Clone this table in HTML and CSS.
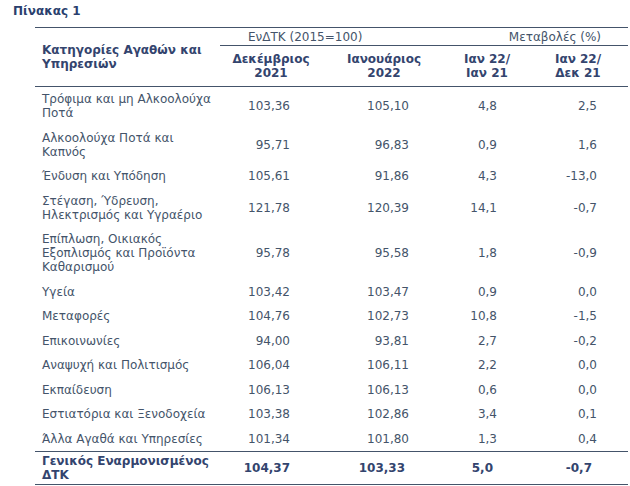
FILE: index.html
```html
<!DOCTYPE html>
<html lang="el">
<head>
<meta charset="utf-8">
<title>Πίνακας 1</title>
<link rel="stylesheet" href="styles.css">
</head>
<body>
<div class="page">
  <h1 class="title">Πίνακας 1</h1>
  <table class="cpi">
    <colgroup>
      <col class="c-cat"><col class="c-dec"><col class="c-jan"><col class="c-y"><col class="c-m">
    </colgroup>
    <thead>
      <tr class="h1">
        <th rowspan="2" class="cat-head">Κατηγορίες Αγαθών και Υπηρεσιών</th>
        <th colspan="2" class="grp grp-idx">ΕνΔΤΚ (2015=100)</th>
        <th colspan="2" class="grp grp-chg">Μεταβολές (%)</th>
      </tr>
      <tr class="h2">
        <th class="sub">Δεκέμβριος<br>2021</th>
        <th class="sub">Ιανουάριος<br>2022</th>
        <th class="sub">Ιαν 22/<br>Ιαν 21</th>
        <th class="sub">Ιαν 22/<br>Δεκ 21</th>
      </tr>
    </thead>
    <tbody>
      <tr><td class="cat">Τρόφιμα και μη Αλκοολούχα Ποτά</td><td class="n n2">103,36</td><td class="n n3">105,10</td><td class="n n4">4,8</td><td class="n n5">2,5</td></tr>
      <tr><td class="cat">Αλκοολούχα Ποτά και Καπνός</td><td class="n n2">95,71</td><td class="n n3">96,83</td><td class="n n4">0,9</td><td class="n n5">1,6</td></tr>
      <tr><td class="cat">Ένδυση και Υπόδηση</td><td class="n n2">105,61</td><td class="n n3">91,86</td><td class="n n4">4,3</td><td class="n n5">-13,0</td></tr>
      <tr><td class="cat">Στέγαση, Ύδρευση, Ηλεκτρισμός και Υγραέριο</td><td class="n n2">121,78</td><td class="n n3">120,39</td><td class="n n4">14,1</td><td class="n n5">-0,7</td></tr>
      <tr><td class="cat">Επίπλωση, Οικιακός Εξοπλισμός και Προϊόντα Καθαρισμού</td><td class="n n2">95,78</td><td class="n n3">95,58</td><td class="n n4">1,8</td><td class="n n5">-0,9</td></tr>
      <tr><td class="cat">Υγεία</td><td class="n n2">103,42</td><td class="n n3">103,47</td><td class="n n4">0,9</td><td class="n n5">0,0</td></tr>
      <tr><td class="cat">Μεταφορές</td><td class="n n2">104,76</td><td class="n n3">102,73</td><td class="n n4">10,8</td><td class="n n5">-1,5</td></tr>
      <tr><td class="cat">Επικοινωνίες</td><td class="n n2">94,00</td><td class="n n3">93,81</td><td class="n n4">2,7</td><td class="n n5">-0,2</td></tr>
      <tr><td class="cat">Αναψυχή και Πολιτισμός</td><td class="n n2">106,04</td><td class="n n3">106,11</td><td class="n n4">2,2</td><td class="n n5">0,0</td></tr>
      <tr><td class="cat">Εκπαίδευση</td><td class="n n2">106,13</td><td class="n n3">106,13</td><td class="n n4">0,6</td><td class="n n5">0,0</td></tr>
      <tr><td class="cat">Εστιατόρια και Ξενοδοχεία</td><td class="n n2">103,38</td><td class="n n3">102,86</td><td class="n n4">3,4</td><td class="n n5">0,1</td></tr>
      <tr><td class="cat">Άλλα Αγαθά και Υπηρεσίες</td><td class="n n2">101,34</td><td class="n n3">101,80</td><td class="n n4">1,3</td><td class="n n5">0,4</td></tr>
    </tbody>
    <tfoot>
      <tr class="total"><td class="cat">Γενικός Εναρμονισμένος ΔΤΚ</td><td class="n n2">104,37</td><td class="n n3">103,33</td><td class="n n4">5,0</td><td class="n n5">-0,7</td></tr>
    </tfoot>
  </table>
</div>
</body>
</html>
```

FILE: styles.css
```css
html, body {
  margin: 0;
  padding: 0;
  background: #ffffff;
}

body {
  font-family: "DejaVu Sans", Verdana, sans-serif;
  font-size: 12px;
  color: #44546a;
}

.page {
  padding: 4px 0 0 13px;
}

.title {
  margin: 0;
  font-size: 12px;
  line-height: 14px;
  font-weight: bold;
  color: #2a3f6e;
}

.cpi {
  margin: 9px 0 0 22px;
  border-collapse: collapse;
  table-layout: fixed;
  width: 593px;
}

.c-cat { width: 185px; }
.c-dec { width: 102px; }
.c-jan { width: 124px; }
.c-y { width: 82px; }
.c-m { width: 100px; }

.cpi th,
.cpi td {
  line-height: 14px;
  vertical-align: middle;
  padding: 0;
}

.cpi thead tr.h1 th {
  border-top: 1px solid #44546a;
}

.cat-head {
  text-align: left;
  padding: 0 0 0 7px !important;
  font-weight: bold;
  color: #33446e;
  border-bottom: 1px solid #44546a;
}

.grp {
  font-weight: normal;
  padding: 2px 0 1px 0 !important;
  border-bottom: 1px solid #44546a;
  color: #44546a;
}

.grp-idx {
  text-align: left;
  padding-left: 28px !important;
}

.grp-chg {
  text-align: right;
  padding-right: 27px !important;
}

.sub {
  font-weight: bold;
  color: #33446e;
  text-align: center;
  padding: 6px 0 6px 0 !important;
  border-bottom: 1px solid #44546a;
}

.cpi tbody td {
  padding-top: 5.25px;
  padding-bottom: 5.25px;
}

.cat {
  text-align: left;
  padding-left: 7px !important;
  padding-right: 4px !important;
}

.n { text-align: right; }
.n2 { padding-right: 32px !important; }
.n3 { padding-right: 37px !important; }
.n4 { padding-right: 31px !important; }
.n5 { padding-right: 31px !important; }

.total td {
  font-weight: bold;
  color: #33446e;
  padding-top: 2px;
  padding-bottom: 2px;
  border-top: 1px solid #44546a;
  border-bottom: 1px solid #44546a;
}

.total .n3 { padding-right: 41px !important; }
.total .n4 { padding-right: 35px !important; }
.total .n5 { padding-right: 36px !important; }
```
